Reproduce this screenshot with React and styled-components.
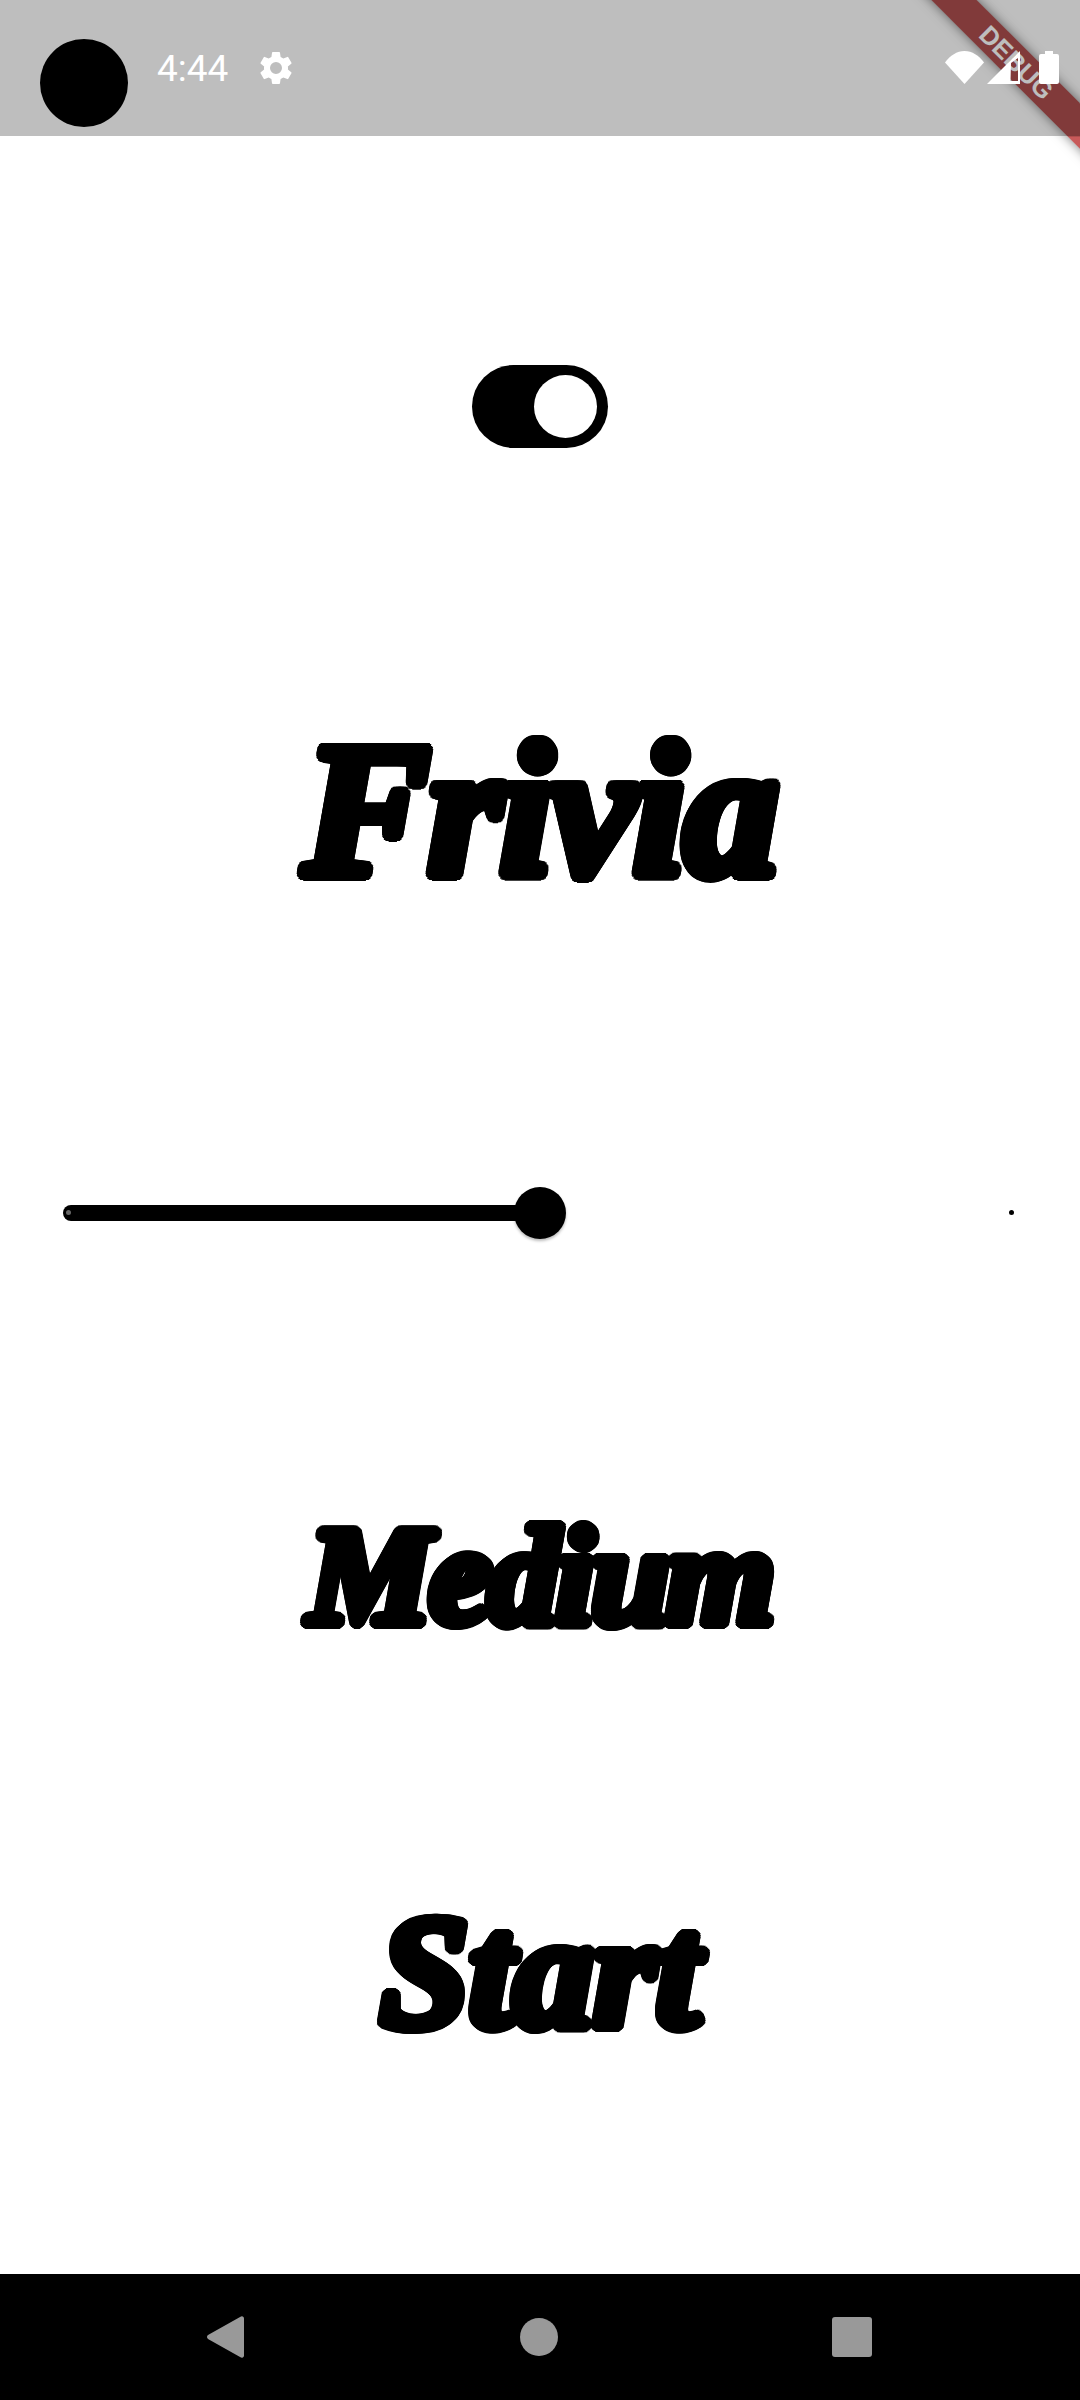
import React from "react";
import styled, { createGlobalStyle } from "styled-components";

const Global = createGlobalStyle`
  html, body { margin: 0; padding: 0; background: #fff; }
  #root { width: 1080px; height: 2400px; overflow: hidden; }
`;

const roundHalo = (r) =>
  Array.from({ length: 24 }, (_, i) => {
    const a = (i / 24) * Math.PI * 2;
    return `${(Math.cos(a) * r).toFixed(2)}px ${(Math.sin(a) * r).toFixed(2)}px 0 #000`;
  }).join(", ");

const Page = styled.div`
  position: relative;
  width: 1080px;
  height: 2400px;
  overflow: hidden;
  display: flex;
  flex-direction: column;
  background: #fff;
  font-family: "Liberation Serif", serif;
`;

const StatusBar = styled.header`
  position: relative;
  z-index: 2;
  height: 136px;
  flex: none;
  box-sizing: border-box;
  background: rgba(0, 0, 0, 0.255);
  display: flex;
  align-items: flex-start;
  padding: 39px 21px 0 40px;
`;

const Camera = styled.div`
  width: 88px;
  height: 88px;
  border-radius: 50%;
  background: #000;
  flex: none;
`;

const Clock = styled.span`
  margin: 8px 0 0 29px;
  font: 400 37px/44px Roboto, sans-serif;
  color: #fff;
  width: 73px;
`;

const Gear = styled.svg`
  width: 40px;
  height: 40px;
  margin: 9px 0 0 26px;
  fill: #fff;
`;

const SystemIcons = styled.div`
  margin-left: auto;
  display: flex;
  align-items: flex-start;
  padding-top: 12px;
`;

const StatusGlyph = styled.svg`
  display: block;
  height: 33px;
  width: ${(p) => p.$w}px;
  margin-left: ${(p) => p.$gap}px;
  fill: #fff;
`;

const Ribbon = styled.div`
  position: absolute;
  z-index: 1;
  left: 870px;
  top: 49.5px;
  width: 300px;
  height: 32px;
  box-sizing: border-box;
  padding-right: 10px;
  transform: rotate(45deg);
  background: linear-gradient(135deg, #ae4e4e 188.4px, #c85a5a 188.4px);
  box-shadow: 0 0 12px rgba(0, 0, 0, 0.5);
  display: flex;
  align-items: center;
  justify-content: center;
  color: #fff;
  font: 700 25.5px/32px "Liberation Sans", sans-serif;
`;

const Main = styled.main`
  flex: 1;
  display: flex;
  flex-direction: column;
`;

const Row = styled.div`
  height: ${(p) => p.$h}px;
  flex: none;
  display: flex;
  align-items: center;
  justify-content: center;
`;

const Toggle = styled.div`
  width: 136px;
  height: 83px;
  box-sizing: border-box;
  border-radius: 42px;
  background: #000;
  display: flex;
  align-items: center;
  justify-content: flex-end;
  padding-right: 11px;
`;

const ToggleThumb = styled.div`
  width: 63px;
  height: 63px;
  border-radius: 50%;
  background: #fff;
`;

const Script = styled.h1`
  margin: 0;
  font-family: "Liberation Serif", serif;
  font-style: italic;
  font-weight: 700;
  font-size: ${(p) => p.$size}px;
  line-height: 1;
  letter-spacing: ${(p) => p.$track}px;
  color: #000;
  text-shadow: ${(p) => roundHalo(p.$halo)};
  white-space: nowrap;
`;

const SliderRow = styled(Row)`
  justify-content: flex-start;
  padding-left: 63px;
  box-sizing: border-box;
`;

const SliderTrack = styled.div`
  position: relative;
  width: 954px;
  height: 16px;
  display: flex;
  align-items: center;
`;

const SliderFill = styled.div`
  width: 477px;
  height: 16px;
  background: #000;
  border-radius: 8px 0 0 8px;
`;

const SliderThumb = styled.div`
  position: absolute;
  left: 451px;
  top: -18px;
  width: 52px;
  height: 52px;
  border-radius: 50%;
  background: #000;
  box-shadow: 0 2px 3px rgba(0, 0, 0, 0.28);
`;

const Tick = styled.span`
  position: absolute;
  top: 5.5px;
  left: ${(p) => p.$left}px;
  width: 5px;
  height: 5px;
  border-radius: 50%;
  background: ${(p) => p.$color};
`;

const NavBar = styled.nav`
  height: 126px;
  flex: none;
  background: #000;
  display: grid;
  grid-template-columns: repeat(3, 1fr);
  justify-items: center;
  align-items: center;
  padding: 0 208px 0 207px;
  box-sizing: border-box;
`;

const NavBack = styled.svg`
  justify-self: start;
  width: 37px;
  height: 42px;
  fill: #999;
`;

const NavHome = styled.div`
  width: 38px;
  height: 38px;
  border-radius: 50%;
  background: #999;
`;

const NavRecent = styled.div`
  justify-self: end;
  width: 40px;
  height: 40px;
  border-radius: 3px;
  background: #999;
`;

export default function App() {
  return (
    <Page>
      <Global />
      <Ribbon>DEBUG</Ribbon>
      <StatusBar>
        <Camera />
        <Clock>4:44</Clock>
        <Gear viewBox="0 0 24 24">
          <path d="M19.14 12.94c.04-.3.06-.61.06-.94 0-.32-.02-.64-.07-.94l2.03-1.58a.49.49 0 0 0 .12-.61l-1.92-3.32a.49.49 0 0 0-.59-.22l-2.39.96c-.5-.38-1.03-.7-1.62-.94l-.36-2.54a.48.48 0 0 0-.48-.41h-3.84c-.24 0-.43.17-.47.41l-.36 2.54c-.59.24-1.13.57-1.62.94l-2.39-.96a.49.49 0 0 0-.59.22L2.74 8.87c-.12.21-.08.47.12.61l2.03 1.58c-.05.3-.09.63-.09.94s.02.64.07.94l-2.03 1.58a.49.49 0 0 0-.12.61l1.92 3.32c.12.22.37.29.59.22l2.39-.96c.5.38 1.03.7 1.62.94l.36 2.54c.05.24.24.41.48.41h3.84c.24 0 .44-.17.47-.41l.36-2.54c.59-.24 1.13-.56 1.62-.94l2.39.96c.22.08.47 0 .59-.22l1.92-3.32c.12-.22.07-.47-.12-.61l-2.01-1.58zM12 15.6A3.6 3.6 0 1 1 12 8.4a3.6 3.6 0 0 1 0 7.2z" />
        </Gear>
        <SystemIcons>
          <StatusGlyph $w={39} $gap={0} viewBox="0 0 39 33">
            <path d="M0 11.5C5 4.5 12 0 19.5 0S34 4.5 39 11.5L19.5 33z" />
          </StatusGlyph>
          <StatusGlyph $w={33} $gap={3} viewBox="0 0 33 33">
            <path fillRule="evenodd" d="M33 0v33H0zM24 12l-.5 18H31V7z" />
          </StatusGlyph>
          <StatusGlyph $w={20} $gap={19} viewBox="0 0 20 33">
            <path d="M6 0h8v3h4a2 2 0 0 1 2 2v26a2 2 0 0 1-2 2H2a2 2 0 0 1-2-2V5a2 2 0 0 1 2-2h4z" />
          </StatusGlyph>
        </SystemIcons>
      </StatusBar>
      <Main>
        <Row $h={541}>
          <Toggle>
            <ToggleThumb />
          </Toggle>
        </Row>
        <Row $h={266}>
          <Script $size={190} $track={-2} $halo={6.5}>Frivia</Script>
        </Row>
        <SliderRow $h={539}>
          <SliderTrack>
            <SliderFill />
            <Tick $left={3} $color="#666" />
            <SliderThumb />
            <Tick $left={946} $color="#000" />
          </SliderTrack>
        </SliderRow>
        <Row $h={187}>
          <Script $size={140} $track={-3} $halo={6}>Medium</Script>
        </Row>
        <Row $h={605}>
          <Script $size={160} $track={0} $halo={6}>Start</Script>
        </Row>
      </Main>
      <NavBar>
        <NavBack viewBox="0 0 37 42">
          <path d="M33.5.8 1 18.9a3 3 0 0 0 0 4.2l32.5 18.1a2.2 2.2 0 0 0 3.5-1.8V2.6A2.2 2.2 0 0 0 33.5.8z" />
        </NavBack>
        <NavHome />
        <NavRecent />
      </NavBar>
    </Page>
  );
}
